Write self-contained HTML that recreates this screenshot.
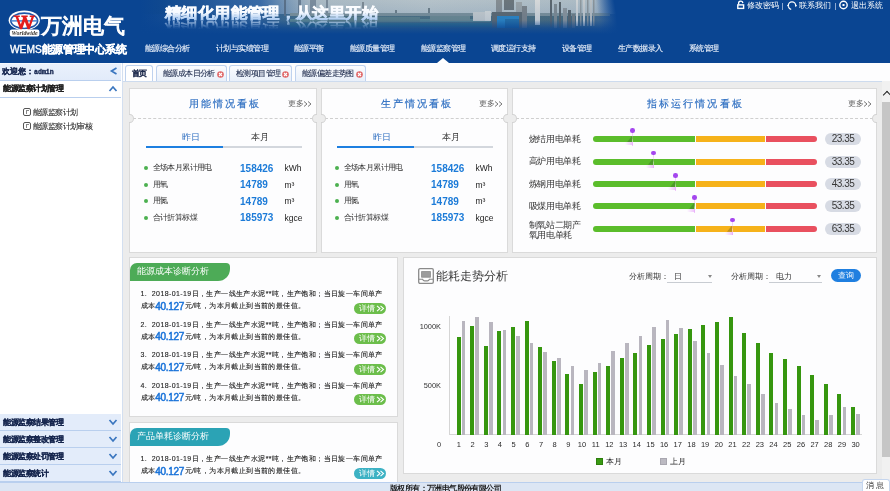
<!DOCTYPE html><html><head><meta charset="utf-8"><style>
*{margin:0;padding:0;box-sizing:border-box}
body{will-change:transform}
html,body{width:890px;height:491px;overflow:hidden;background:#ececec;font-family:"Liberation Sans",sans-serif;color:#333}
.a{position:absolute;white-space:nowrap}
#hdr{position:absolute;left:0;top:0;width:890px;height:63px;background:#0a4592;overflow:hidden}
.nav{position:absolute;top:44px;font-size:8px;letter-spacing:-0.55px;color:#e6edf8;-webkit-text-stroke:0.15px #e6edf8;line-height:10px;white-space:nowrap}
.top{position:absolute;top:1px;font-size:8px;color:#fff;line-height:10px;white-space:nowrap}
#side{position:absolute;left:0;top:63px;width:123px;height:419px;background:#fff;border-right:1px solid #d3dff0}
.srow{position:absolute;left:0;width:121px;height:17px;background:#e3ecfa;border-bottom:1px solid #b9cfee;font-size:8px;font-weight:bold;color:#1d2d55;-webkit-text-stroke:0.2px currentColor;line-height:16px;padding-left:3px;white-space:nowrap}
.chev{position:absolute;width:5px;height:5px;border-right:1.5px solid #3b79c3;border-bottom:1.5px solid #3b79c3}
#tabs{position:absolute;left:123px;top:63px;width:767px;height:18px;background:#fdfdfe}
.tab{position:absolute;top:65px;height:16px;border:1px solid #bfd2ee;border-bottom:none;border-radius:3px 3px 0 0;background:linear-gradient(#fbfcfe,#e9f0fa);font-size:8px;letter-spacing:-0.6px;color:#1d2a4c;-webkit-text-stroke:0.1px #1d2a4c;line-height:15px;white-space:nowrap}
.x{position:absolute;top:5px;width:6px;height:6px;border-radius:50%;background:#e25b5b}
.x:before,.x:after{content:"";position:absolute;left:1px;top:2.5px;width:4px;height:1px;background:#fff;transform:rotate(45deg)}
.x:after{transform:rotate(-45deg)}
.card{position:absolute;background:#fdfdfe;border:1px solid #dadada}
.ttl{position:absolute;font-size:10px;color:#2a6cc0;letter-spacing:2.2px;-webkit-text-stroke:0.15px #2a6cc0;line-height:12px;white-space:nowrap}
.more{position:absolute;font-size:7.5px;color:#666;line-height:9px;white-space:nowrap}
.dash{position:absolute;height:0;border-top:1px dashed #cfcfcf}
.notch{position:absolute;width:9px;height:9.5px;border-radius:50%;background:#ececec;border:1px solid #d3d3d3}
.stab{position:absolute;font-size:8.5px;line-height:10px;white-space:nowrap}
.li{position:absolute;font-size:8px;letter-spacing:-0.6px;color:#333;line-height:9px;white-space:nowrap}
.dot{position:absolute;width:4px;height:4px;border-radius:50%;background:#4cb050}
.num{position:absolute;font-size:11px;font-weight:bold;color:#1c7bd8;line-height:12px;white-space:nowrap;transform:scaleX(0.91);transform-origin:0 0}
.unit{position:absolute;font-size:8.5px;color:#222;line-height:9px;white-space:nowrap}
.bar{position:absolute;height:6px}
.pill{position:absolute;width:36px;height:12px;border-radius:6px;background:#d7dbe4;font-size:10px;letter-spacing:-0.5px;color:#383838;text-align:center;line-height:12.5px}
.txt{position:absolute;font-size:7px;letter-spacing:0.4px;color:#1e1e1e;-webkit-text-stroke:0.12px #1e1e1e;line-height:12px;white-space:nowrap}
.txt b{line-height:0;vertical-align:-1.5px;font-weight:normal;font-size:10px;letter-spacing:-0.3px;color:#1a73d9;-webkit-text-stroke:0.5px #1a73d9;margin-right:0.5px}
.det{position:absolute;width:32.5px;height:11px;border-radius:6px;background:#6cbe4b;color:#fff;font-size:8px;line-height:11px;padding-left:5.5px;white-space:nowrap}
.gb{position:absolute;background:#36960f}
.yb{position:absolute;background:#b9b6bf}
.xl{position:absolute;font-size:7.5px;color:#2a2a2a;line-height:8px;width:20px;text-align:center}
</style></head><body>
<div id="hdr">
<svg class="a" style="left:140px;top:0" width="480" height="40" viewBox="0 0 480 40">
<defs>
<linearGradient id="sky" x1="0" x2="480" y1="0" y2="0" gradientUnits="userSpaceOnUse">
<stop offset="0" stop-color="#0a4592"/>
<stop offset="0.05" stop-color="#10498f"/>
<stop offset="0.25" stop-color="#3a6ba6"/>
<stop offset="0.31" stop-color="#7f9cb8"/>
<stop offset="0.36" stop-color="#a9b9c3"/>
<stop offset="0.6" stop-color="#b5c2c9"/>
<stop offset="0.94" stop-color="#acbbc4"/>
<stop offset="1" stop-color="#5f85b3"/>
</linearGradient>
<linearGradient id="gr" x1="0" x2="480" y1="0" y2="0" gradientUnits="userSpaceOnUse">
<stop offset="0" stop-color="#0a4592"/>
<stop offset="0.25" stop-color="#2d5f98"/>
<stop offset="0.35" stop-color="#4f7484"/>
<stop offset="0.9" stop-color="#4c6c7c"/>
<stop offset="1" stop-color="#3d6aa0"/>
</linearGradient>
<linearGradient id="vf" x1="0" x2="0" y1="0" y2="40" gradientUnits="userSpaceOnUse">
<stop offset="0" stop-color="#0a4592" stop-opacity="0"/>
<stop offset="0.5" stop-color="#0a4592" stop-opacity="0.12"/>
<stop offset="0.7" stop-color="#0a4592" stop-opacity="0.75"/>
<stop offset="0.85" stop-color="#0a4592" stop-opacity="1"/>
</linearGradient>
<radialGradient id="rf" cx="200" cy="50" r="280" gradientUnits="userSpaceOnUse">
<stop offset="0.93" stop-color="#0a4592" stop-opacity="0"/>
<stop offset="0.995" stop-color="#0a4592" stop-opacity="1"/>
</radialGradient>
<linearGradient id="tg" x1="0" x2="0" y1="4" y2="20" gradientUnits="userSpaceOnUse">
<stop offset="0" stop-color="#ffffff"/>
<stop offset="0.55" stop-color="#f5f9ff"/>
<stop offset="0.7" stop-color="#d6e6fa"/>
<stop offset="1" stop-color="#a9c9f0"/>
</linearGradient>
<linearGradient id="rg" x1="0" x2="0" y1="18" y2="11.5" gradientUnits="userSpaceOnUse">
<stop offset="0" stop-color="#c5dcf8" stop-opacity="0.6"/>
<stop offset="1" stop-color="#8fb4e6" stop-opacity="0"/>
</linearGradient>
</defs>
<rect x="0" y="0" width="480" height="40" fill="url(#sky)"/>
<rect x="0" y="14" width="480" height="26" fill="url(#gr)"/>
<rect x="150" y="19" width="200" height="3" fill="#5f8790"/>
<rect x="150" y="23" width="210" height="4" fill="#3d7486"/>
<rect x="144" y="0" width="2" height="16" fill="#5a7088"/><rect x="158" y="0" width="3" height="15" fill="#6a7f94"/><rect x="170" y="0" width="6" height="14" fill="#7a8c9c"/><rect x="186" y="0" width="2" height="15" fill="#7a8a98"/><rect x="222" y="2" width="2" height="12" fill="#7d8a93"/><rect x="288" y="8" width="2" height="7" fill="#6f7f88"/><rect x="235" y="11" width="2" height="5" fill="#6f7f88"/><rect x="255" y="10" width="2" height="6" fill="#6f7f88"/><rect x="150" y="13" width="320" height="3" fill="#7d9199"/><rect x="180" y="17" width="100" height="5" fill="#5f8088"/><rect x="290" y="16" width="40" height="5" fill="#6f8a90"/><rect x="333" y="12" width="12" height="9" fill="#c6cbcc"/><rect x="345" y="11" width="6" height="10" fill="#d2d6d6"/><rect x="356" y="0" width="6" height="14" fill="#858d92"/><rect x="364" y="0" width="10" height="10" fill="#6b757b"/><rect x="376" y="2" width="6" height="14" fill="#9aa2a6"/><rect x="352" y="12" width="34" height="16" fill="#5f6a70"/><rect x="357" y="16" width="22" height="12" fill="#2d86c4"/><rect x="365" y="19" width="14" height="9" fill="#2670a8"/><rect x="382" y="6" width="5" height="22" fill="#7c8388"/><rect x="395" y="0" width="5" height="25" fill="#d5d8d9"/><rect x="410" y="0" width="2" height="27" fill="#5b666d"/><rect x="414" y="4" width="3" height="24" fill="#7f8a90"/><rect x="419" y="2" width="2" height="26" fill="#5a646a"/><rect x="423" y="8" width="4" height="20" fill="#8b949a"/><rect x="428" y="10" width="3" height="18" fill="#5b666d"/><rect x="432" y="14" width="3" height="14" fill="#747e84"/><rect x="436" y="0" width="2" height="26" fill="#cfd3d5"/><rect x="440" y="0" width="1.5" height="26" fill="#8f999e"/><rect x="443" y="0" width="2" height="26" fill="#c4c9cc"/><rect x="447" y="0" width="1.5" height="26" fill="#8a9499"/><rect x="450" y="0" width="2" height="26" fill="#b9bfc2"/><rect x="453" y="0" width="1.5" height="26" fill="#8a9499"/>
<rect x="0" y="0" width="480" height="40" fill="url(#vf)"/>
<rect x="0" y="0" width="480" height="40" fill="url(#rf)"/>
<text x="25" y="17.6" font-size="15" font-weight="bold" fill="url(#tg)" stroke="url(#tg)" stroke-width="0.6" textLength="213" lengthAdjust="spacingAndGlyphs">精细化用能管理，从这里开始</text>
<g transform="translate(0,40.6) scale(1,-1)"><text x="25" y="17.6" font-size="15" font-weight="bold" fill="url(#rg)" textLength="213" lengthAdjust="spacingAndGlyphs">精细化用能管理，从这里开始</text></g>
</svg>
<svg class="a" style="left:0;top:0" width="46" height="40" viewBox="0 0 46 40">
<ellipse cx="24.25" cy="20.3" rx="15.6" ry="9.8" fill="#fff"/>
<ellipse cx="24.25" cy="20.8" rx="13.4" ry="7.7" fill="none" stroke="#1f56a8" stroke-width="1.6"/>
<rect x="11" y="20.2" width="26.5" height="1.4" fill="#3f7fd0"/>
<path d="M12.8 15.6h7v1.4h-1.6l2.6 7.6 2.2-6.4-0.5-1.2h-1.2v-1.4h6.4v1.4h-1.4l2.8 7.6 2.4-7.6h-1.8v-1.4h5.2v1.4h-1l-4.4 12.4h-1.8l-2.9-8-2.8 8h-1.8l-4.6-12.4h-1z" fill="#e31c1c"/>
<rect x="9.8" y="29.6" width="29.6" height="7" rx="2" fill="#fff"/>
<text x="24.6" y="35.3" font-size="6" font-style="italic" font-weight="bold" text-anchor="middle" fill="#3a3530" font-family="Liberation Serif" textLength="26" lengthAdjust="spacingAndGlyphs">Worldwide</text>
</svg>
<div class="a" style="left:41px;top:13.5px;font-size:21px;font-weight:normal;-webkit-text-stroke:1px #fff;color:#fff;line-height:24px">万洲电气</div>
<div class="a" style="left:10px;top:42.5px;font-size:11px;letter-spacing:-0.4px;font-weight:bold;color:#fff;-webkit-text-stroke:0.3px #fff;line-height:12px"><span style="font-weight:normal;font-size:10.2px;letter-spacing:0;-webkit-text-stroke:0.35px #fff">WEMS</span>能源管理中心系统</div>
<div class="nav" style="left:145px">能源综合分析</div>
<div class="nav" style="left:216px">计划与实绩管理</div>
<div class="nav" style="left:294px">能源平衡</div>
<div class="nav" style="left:350px">能源质量管理</div>
<div class="nav" style="left:421px">能源监察管理</div>
<div class="nav" style="left:491px">调度运行支持</div>
<div class="nav" style="left:562px">设备管理</div>
<div class="nav" style="left:618px">生产数据录入</div>
<div class="nav" style="left:689px">系统管理</div>
<div class="a" style="left:436.5px;top:57.5px;width:0;height:0;border-left:6px solid transparent;border-right:6px solid transparent;border-bottom:5.5px solid #fff"></div>
<div class="top" style="left:747px;top:1px">修改密码</div><div class="a" style="left:782px;top:3px;width:1px;height:7px;background:#8fa9d0"></div>
<div class="top" style="left:799px;top:1px">联系我们</div><div class="a" style="left:834.5px;top:3px;width:1px;height:7px;background:#8fa9d0"></div>
<div class="top" style="left:851px;top:1px">退出系统</div>
<svg class="a" style="left:736px;top:0" width="10" height="10" viewBox="0 0 10 10"><path d="M2.6 4.6V3.3A2.1 2.1 0 0 1 6.8 3.1" fill="none" stroke="#fff" stroke-width="1.3"/><rect x="1.8" y="4.9" width="5.8" height="3.5" fill="none" stroke="#fff" stroke-width="1.4"/></svg>
<svg class="a" style="left:786px;top:0" width="12" height="11" viewBox="0 0 12 11"><path d="M2.3 6.2V5.6A3.7 3.7 0 0 1 9.7 5.6V6.2" fill="none" stroke="#fff" stroke-width="1.3"/><path d="M1 5.6L2.6 4.6V7.2z M11 5.6L9.4 4.6V7.2z" fill="#fff"/><path d="M2.5 6.5Q2.8 9 5.2 9.3" fill="none" stroke="#fff" stroke-width="1.2"/></svg>
<svg class="a" style="left:838px;top:0" width="11" height="10" viewBox="0 0 11 10"><circle cx="5.5" cy="5" r="3.7" fill="none" stroke="#fff" stroke-width="1.4"/><rect x="4.5" y="4" width="2" height="2" fill="#fff"/></svg>
</div>
<div id="side"></div>
<div class="srow" style="top:63px;height:18px;border-top:1px solid #f4f8fe;background:linear-gradient(#eaf1fc,#e2ebfa);font-size:7.5px;padding-left:2px;color:#15254f;-webkit-text-stroke:0.2px #15254f">欢迎您：<span style="font-family:'Liberation Mono',monospace;font-size:6.6px;font-weight:bold;-webkit-text-stroke:0.35px #15254f">admin</span></div>
<svg class="a" style="left:109px;top:66px" width="10" height="10"><path d="M7.5 2 L2.5 5 L7.5 8" fill="none" stroke="#3a76bf" stroke-width="1.7"/></svg>
<div class="srow" style="top:81px;height:17px;background:#fff;color:#222;letter-spacing:-0.5px">能源监察计划管理</div>
<svg class="a" style="left:108px;top:84px" width="10" height="10"><path d="M1.5 7 L5 3 L8.5 7" fill="none" stroke="#3a76bf" stroke-width="1.7"/></svg>
<div class="a" style="left:23px;top:108px;width:8px;height:8px;border:1.2px solid #555;border-radius:2px"></div>
<div class="a" style="left:25.5px;top:110px;width:3px;height:4px;border-left:1px solid #888;border-top:1px solid #888"></div>
<div class="li" style="left:33px;top:107.5px;color:#2a2a2a;-webkit-text-stroke:0.1px #2a2a2a">能源监察计划</div>
<div class="a" style="left:23px;top:122px;width:8px;height:8px;border:1.2px solid #555;border-radius:2px"></div>
<div class="a" style="left:25.5px;top:124px;width:3px;height:4px;border-left:1px solid #888;border-top:1px solid #888"></div>
<div class="li" style="left:33px;top:121.5px;color:#2a2a2a;-webkit-text-stroke:0.1px #2a2a2a">能源监察计划审核</div>
<div class="srow" style="top:414px;height:17px;letter-spacing:-0.5px;line-height:18px;color:#16264e">能源监察结果管理</div>
<svg class="a" style="left:108px;top:417px" width="10" height="10"><path d="M1.5 3 L5 7 L8.5 3" fill="none" stroke="#3a76bf" stroke-width="1.7"/></svg>
<div class="srow" style="top:431px;height:17px;letter-spacing:-0.5px;line-height:18px;color:#16264e">能源监察整改管理</div>
<svg class="a" style="left:108px;top:434px" width="10" height="10"><path d="M1.5 3 L5 7 L8.5 3" fill="none" stroke="#3a76bf" stroke-width="1.7"/></svg>
<div class="srow" style="top:448px;height:17px;letter-spacing:-0.5px;line-height:18px;color:#16264e">能源监察处罚管理</div>
<svg class="a" style="left:108px;top:451px" width="10" height="10"><path d="M1.5 3 L5 7 L8.5 3" fill="none" stroke="#3a76bf" stroke-width="1.7"/></svg>
<div class="srow" style="top:465px;height:17px;letter-spacing:-0.5px;line-height:18px;color:#16264e">能源监察统计</div>
<svg class="a" style="left:108px;top:468px" width="10" height="10"><path d="M1.5 3 L5 7 L8.5 3" fill="none" stroke="#3a76bf" stroke-width="1.7"/></svg>
<div id="tabs"></div>
<div class="a" style="left:123px;top:81px;width:767px;height:1px;background:#cddbee"></div>
<div class="tab" style="left:125px;width:28px;background:#fff;font-weight:bold;padding-left:5.5px">首页</div>
<div class="tab" style="left:156px;width:71px;padding-left:6px">能源成本日分析<svg style="position:absolute;left:59.5px;top:4.5px" width="7" height="7" viewBox="0 0 7 7"><circle cx="3.5" cy="3.5" r="3.3" fill="#e06666"/><path d="M2 2L5 5M5 2L2 5" stroke="#fff" stroke-width="1.1"/></svg></div>
<div class="tab" style="left:229px;width:63px;padding-left:6px">检测项目管理<svg style="position:absolute;left:51.5px;top:4.5px" width="7" height="7" viewBox="0 0 7 7"><circle cx="3.5" cy="3.5" r="3.3" fill="#e06666"/><path d="M2 2L5 5M5 2L2 5" stroke="#fff" stroke-width="1.1"/></svg></div>
<div class="tab" style="left:295px;width:71px;padding-left:6px">能源偏差走势图<svg style="position:absolute;left:59.5px;top:4.5px" width="7" height="7" viewBox="0 0 7 7"><circle cx="3.5" cy="3.5" r="3.3" fill="#e06666"/><path d="M2 2L5 5M5 2L2 5" stroke="#fff" stroke-width="1.1"/></svg></div>
<div class="card" style="left:129px;top:88px;width:188px;height:165px"></div>
<div class="ttl" style="left:188.5px;top:97.5px">用能情况看板</div>
<div class="more" style="left:288px;top:99px">更多</div><svg class="a" style="left:303px;top:100px" width="10" height="8"><path d="M1 1.5L4 4L1 6.5M5 1.5L8 4L5 6.5" fill="none" stroke="#777" stroke-width="1"/></svg>
<div class="dash" style="left:133px;top:118px;width:180px"></div>
<div class="stab" style="left:182px;top:132px;color:#2e6ec0">昨日</div>
<div class="stab" style="left:251px;top:132px;color:#333">本月</div>
<div class="a" style="left:146px;top:146px;width:77px;height:2px;background:#1d7fe0"></div>
<div class="a" style="left:223px;top:146px;width:79px;height:2px;background:#d3d7dd"></div>
<div class="dot" style="left:144px;top:166.0px"></div>
<div class="li" style="left:152.5px;top:163.0px">全场本月累计用电</div>
<div class="num" style="left:239.5px;top:161.5px">158426</div>
<div class="unit" style="left:284.5px;top:164.0px">kWh</div>
<div class="dot" style="left:144px;top:182.5px"></div>
<div class="li" style="left:152.5px;top:179.5px">用氧</div>
<div class="num" style="left:239.5px;top:178.0px">14789</div>
<div class="unit" style="left:284.5px;top:180.5px">m³</div>
<div class="dot" style="left:144px;top:199.0px"></div>
<div class="li" style="left:152.5px;top:196.0px">用氮</div>
<div class="num" style="left:239.5px;top:194.5px">14789</div>
<div class="unit" style="left:284.5px;top:197.0px">m³</div>
<div class="dot" style="left:144px;top:215.5px"></div>
<div class="li" style="left:152.5px;top:212.5px">合计折算标煤</div>
<div class="num" style="left:239.5px;top:211.0px">185973</div>
<div class="unit" style="left:284.5px;top:213.5px">kgce</div>
<div class="card" style="left:321px;top:88px;width:187px;height:165px"></div>
<div class="ttl" style="left:380.5px;top:97.5px">生产情况看板</div>
<div class="more" style="left:479px;top:99px">更多</div><svg class="a" style="left:494px;top:100px" width="10" height="8"><path d="M1 1.5L4 4L1 6.5M5 1.5L8 4L5 6.5" fill="none" stroke="#777" stroke-width="1"/></svg>
<div class="dash" style="left:325px;top:118px;width:179px"></div>
<div class="stab" style="left:373px;top:132px;color:#2e6ec0">昨日</div>
<div class="stab" style="left:442px;top:132px;color:#333">本月</div>
<div class="a" style="left:337px;top:146px;width:77px;height:2px;background:#1d7fe0"></div>
<div class="a" style="left:414px;top:146px;width:79px;height:2px;background:#d3d7dd"></div>
<div class="dot" style="left:335px;top:166.0px"></div>
<div class="li" style="left:343.5px;top:163.0px">全场本月累计用电</div>
<div class="num" style="left:430.5px;top:161.5px">158426</div>
<div class="unit" style="left:475.5px;top:164.0px">kWh</div>
<div class="dot" style="left:335px;top:182.5px"></div>
<div class="li" style="left:343.5px;top:179.5px">用氧</div>
<div class="num" style="left:430.5px;top:178.0px">14789</div>
<div class="unit" style="left:475.5px;top:180.5px">m³</div>
<div class="dot" style="left:335px;top:199.0px"></div>
<div class="li" style="left:343.5px;top:196.0px">用氮</div>
<div class="num" style="left:430.5px;top:194.5px">14789</div>
<div class="unit" style="left:475.5px;top:197.0px">m³</div>
<div class="dot" style="left:335px;top:215.5px"></div>
<div class="li" style="left:343.5px;top:212.5px">合计折算标煤</div>
<div class="num" style="left:430.5px;top:211.0px">185973</div>
<div class="unit" style="left:475.5px;top:213.5px">kgce</div>
<div class="card" style="left:512px;top:88px;width:365px;height:165px"></div>
<div class="ttl" style="left:646.5px;top:97.5px">指标运行情况看板</div>
<div class="more" style="left:848px;top:99px">更多</div><svg class="a" style="left:863px;top:100px" width="10" height="8"><path d="M1 1.5L4 4L1 6.5M5 1.5L8 4L5 6.5" fill="none" stroke="#777" stroke-width="1"/></svg>
<div class="dash" style="left:516px;top:118px;width:357px"></div>
<div class="a" style="left:129.0px;top:113px;width:6.5px;height:11px;overflow:hidden"><div class="notch" style="left:-4.0px;top:0.6px"></div></div>
<div class="a" style="left:310.5px;top:113px;width:6.5px;height:11px;overflow:hidden"><div class="notch" style="left:1.5px;top:0.6px"></div></div>
<div class="a" style="left:321.0px;top:113px;width:6.5px;height:11px;overflow:hidden"><div class="notch" style="left:-4.0px;top:0.6px"></div></div>
<div class="a" style="left:501.5px;top:113px;width:6.5px;height:11px;overflow:hidden"><div class="notch" style="left:1.5px;top:0.6px"></div></div>
<div class="a" style="left:512.0px;top:113px;width:6.5px;height:11px;overflow:hidden"><div class="notch" style="left:-4.0px;top:0.6px"></div></div>
<div class="a" style="left:870.5px;top:113px;width:6.5px;height:11px;overflow:hidden"><div class="notch" style="left:1.5px;top:0.6px"></div></div>
<div class="li" style="left:528.5px;top:134.5px;font-size:9px;letter-spacing:-0.3px">烧结用电单耗</div>
<div class="bar" style="left:593px;top:136px;width:102px;background:#5bbd2b;border-radius:3px 0 0 3px"></div>
<div class="bar" style="left:696px;top:136px;width:69px;background:#f6b21a"></div>
<div class="bar" style="left:766px;top:136px;width:51px;background:#e9505f;border-radius:0 3px 3px 0"></div>
<div class="pill" style="left:825px;top:133px">23.35</div>
<div class="a" style="left:632px;top:132.5px;width:1px;height:13px;background:linear-gradient(rgba(225,150,245,.5),rgba(225,150,245,.2) 40%,rgba(255,255,255,.5) 60%,rgba(225,150,245,.6))"></div>
<div class="a" style="left:627px;top:136px;width:5px;height:6.3px;background:rgba(40,60,40,.28);clip-path:polygon(100% 0,100% 100%,0 100%)"></div>
<div class="a" style="left:625px;top:142.3px;width:7.5px;height:3px;background:linear-gradient(90deg,rgba(230,160,250,0),rgba(230,160,250,.7))"></div>
<div class="a" style="left:630.2px;top:128.1px;width:4.6px;height:4.6px;border-radius:50%;background:#a446ee"></div>
<div class="li" style="left:528.5px;top:157.0px;font-size:9px;letter-spacing:-0.3px">高炉用电单耗</div>
<div class="bar" style="left:593px;top:158.5px;width:102px;background:#5bbd2b;border-radius:3px 0 0 3px"></div>
<div class="bar" style="left:696px;top:158.5px;width:69px;background:#f6b21a"></div>
<div class="bar" style="left:766px;top:158.5px;width:51px;background:#e9505f;border-radius:0 3px 3px 0"></div>
<div class="pill" style="left:825px;top:155.5px">33.35</div>
<div class="a" style="left:653px;top:155.0px;width:1px;height:13px;background:linear-gradient(rgba(225,150,245,.5),rgba(225,150,245,.2) 40%,rgba(255,255,255,.5) 60%,rgba(225,150,245,.6))"></div>
<div class="a" style="left:648px;top:158.5px;width:5px;height:6.3px;background:rgba(40,60,40,.28);clip-path:polygon(100% 0,100% 100%,0 100%)"></div>
<div class="a" style="left:646px;top:164.8px;width:7.5px;height:3px;background:linear-gradient(90deg,rgba(230,160,250,0),rgba(230,160,250,.7))"></div>
<div class="a" style="left:651.2px;top:150.6px;width:4.6px;height:4.6px;border-radius:50%;background:#a446ee"></div>
<div class="li" style="left:528.5px;top:179.5px;font-size:9px;letter-spacing:-0.3px">炼钢用电单耗</div>
<div class="bar" style="left:593px;top:181px;width:102px;background:#5bbd2b;border-radius:3px 0 0 3px"></div>
<div class="bar" style="left:696px;top:181px;width:69px;background:#f6b21a"></div>
<div class="bar" style="left:766px;top:181px;width:51px;background:#e9505f;border-radius:0 3px 3px 0"></div>
<div class="pill" style="left:825px;top:178px">43.35</div>
<div class="a" style="left:675px;top:177.5px;width:1px;height:13px;background:linear-gradient(rgba(225,150,245,.5),rgba(225,150,245,.2) 40%,rgba(255,255,255,.5) 60%,rgba(225,150,245,.6))"></div>
<div class="a" style="left:670px;top:181px;width:5px;height:6.3px;background:rgba(40,60,40,.28);clip-path:polygon(100% 0,100% 100%,0 100%)"></div>
<div class="a" style="left:668px;top:187.3px;width:7.5px;height:3px;background:linear-gradient(90deg,rgba(230,160,250,0),rgba(230,160,250,.7))"></div>
<div class="a" style="left:673.2px;top:173.1px;width:4.6px;height:4.6px;border-radius:50%;background:#a446ee"></div>
<div class="li" style="left:528.5px;top:201.5px;font-size:9px;letter-spacing:-0.3px">吸煤用电单耗</div>
<div class="bar" style="left:593px;top:203px;width:102px;background:#5bbd2b;border-radius:3px 0 0 3px"></div>
<div class="bar" style="left:696px;top:203px;width:69px;background:#f6b21a"></div>
<div class="bar" style="left:766px;top:203px;width:51px;background:#e9505f;border-radius:0 3px 3px 0"></div>
<div class="pill" style="left:825px;top:200px">53.35</div>
<div class="a" style="left:694px;top:199.5px;width:1px;height:13px;background:linear-gradient(rgba(225,150,245,.5),rgba(225,150,245,.2) 40%,rgba(255,255,255,.5) 60%,rgba(225,150,245,.6))"></div>
<div class="a" style="left:689px;top:203px;width:5px;height:6.3px;background:rgba(40,60,40,.28);clip-path:polygon(100% 0,100% 100%,0 100%)"></div>
<div class="a" style="left:687px;top:209.3px;width:7.5px;height:3px;background:linear-gradient(90deg,rgba(230,160,250,0),rgba(230,160,250,.7))"></div>
<div class="a" style="left:692.2px;top:195.1px;width:4.6px;height:4.6px;border-radius:50%;background:#a446ee"></div>
<div class="li" style="left:528.5px;top:219.5px;line-height:10.5px;font-size:9px;letter-spacing:-0.3px">制氧站二期产<br>氧用电单耗</div>
<div class="bar" style="left:593px;top:225.5px;width:102px;background:#5bbd2b;border-radius:3px 0 0 3px"></div>
<div class="bar" style="left:696px;top:225.5px;width:69px;background:#f6b21a"></div>
<div class="bar" style="left:766px;top:225.5px;width:51px;background:#e9505f;border-radius:0 3px 3px 0"></div>
<div class="pill" style="left:825px;top:222.5px">63.35</div>
<div class="a" style="left:732px;top:222.0px;width:1px;height:13px;background:linear-gradient(rgba(225,150,245,.5),rgba(225,150,245,.2) 40%,rgba(255,255,255,.5) 60%,rgba(225,150,245,.6))"></div>
<div class="a" style="left:727px;top:225.5px;width:5px;height:6.3px;background:rgba(40,60,40,.28);clip-path:polygon(100% 0,100% 100%,0 100%)"></div>
<div class="a" style="left:725px;top:231.8px;width:7.5px;height:3px;background:linear-gradient(90deg,rgba(230,160,250,0),rgba(230,160,250,.7))"></div>
<div class="a" style="left:730.2px;top:217.6px;width:4.6px;height:4.6px;border-radius:50%;background:#a446ee"></div>
<div class="card" style="left:129px;top:257px;width:269px;height:160px"></div>
<div class="a" style="left:129.5px;top:263.3px;width:100.5px;height:17.7px;background:#4dab57;border-radius:7px 4px 12px 0"></div>
<div class="a" style="left:137px;top:266px;font-size:9px;color:#fff;line-height:11px">能源成本诊断分析</div>
<div class="txt" style="left:140.5px;top:288.0px">1.&nbsp;&nbsp;2018-01-19日，生产一线生产水泥**吨，生产饱和；当日旋一车间单产</div>
<div class="txt" style="left:140.5px;top:300.0px">成本<b>40.127</b>元/吨，为本月截止到当前的最佳值。</div>
<div class="det" style="left:353.5px;top:302.5px;background:#6cbe4b">详情<svg style="position:absolute;left:22px;top:2px" width="9" height="7"><path d="M1 0.8L4 3.5L1 6.2M4.5 0.8L7.5 3.5L4.5 6.2" fill="none" stroke="#fff" stroke-width="1.1"/></svg></div>
<div class="txt" style="left:140.5px;top:318.5px">2.&nbsp;&nbsp;2018-01-19日，生产一线生产水泥**吨，生产饱和；当日旋一车间单产</div>
<div class="txt" style="left:140.5px;top:330.5px">成本<b>40.127</b>元/吨，为本月截止到当前的最佳值。</div>
<div class="det" style="left:353.5px;top:333.0px;background:#6cbe4b">详情<svg style="position:absolute;left:22px;top:2px" width="9" height="7"><path d="M1 0.8L4 3.5L1 6.2M4.5 0.8L7.5 3.5L4.5 6.2" fill="none" stroke="#fff" stroke-width="1.1"/></svg></div>
<div class="txt" style="left:140.5px;top:349.0px">3.&nbsp;&nbsp;2018-01-19日，生产一线生产水泥**吨，生产饱和；当日旋一车间单产</div>
<div class="txt" style="left:140.5px;top:361.0px">成本<b>40.127</b>元/吨，为本月截止到当前的最佳值。</div>
<div class="det" style="left:353.5px;top:363.5px;background:#6cbe4b">详情<svg style="position:absolute;left:22px;top:2px" width="9" height="7"><path d="M1 0.8L4 3.5L1 6.2M4.5 0.8L7.5 3.5L4.5 6.2" fill="none" stroke="#fff" stroke-width="1.1"/></svg></div>
<div class="txt" style="left:140.5px;top:379.5px">4.&nbsp;&nbsp;2018-01-19日，生产一线生产水泥**吨，生产饱和；当日旋一车间单产</div>
<div class="txt" style="left:140.5px;top:391.5px">成本<b>40.127</b>元/吨，为本月截止到当前的最佳值。</div>
<div class="det" style="left:353.5px;top:394.0px;background:#6cbe4b">详情<svg style="position:absolute;left:22px;top:2px" width="9" height="7"><path d="M1 0.8L4 3.5L1 6.2M4.5 0.8L7.5 3.5L4.5 6.2" fill="none" stroke="#fff" stroke-width="1.1"/></svg></div>
<div class="card" style="left:129px;top:422px;width:269px;height:80px"></div>
<div class="a" style="left:129.5px;top:428.3px;width:100.5px;height:17.7px;background:#2ba3b5;border-radius:7px 4px 12px 0"></div>
<div class="a" style="left:137px;top:431px;font-size:9px;color:#fff;line-height:11px">产品单耗诊断分析</div>
<div class="txt" style="left:140.5px;top:453.0px">1.&nbsp;&nbsp;2018-01-19日，生产一线生产水泥**吨，生产饱和；当日旋一车间单产</div>
<div class="txt" style="left:140.5px;top:465.0px">成本<b>40.127</b>元/吨，为本月截止到当前的最佳值。</div>
<div class="det" style="left:353.5px;top:467.5px;background:#3db2c4">详情<svg style="position:absolute;left:22px;top:2px" width="9" height="7"><path d="M1 0.8L4 3.5L1 6.2M4.5 0.8L7.5 3.5L4.5 6.2" fill="none" stroke="#fff" stroke-width="1.1"/></svg></div>
<div class="card" style="left:403px;top:257px;width:474px;height:217px"></div>
<svg class="a" style="left:418px;top:268px" width="16" height="16" viewBox="0 0 16 16"><rect x="0.7" y="0.7" width="14.6" height="14.6" rx="1.3" fill="#fff" stroke="#8a8a8a" stroke-width="1.3"/><rect x="3.6" y="3.6" width="8.8" height="5.6" fill="#9c9c9c" stroke="#8a8a8a" stroke-width="0.8"/><path d="M0.7 11.3H4.6Q5.2 12.9 6.6 12.9H9.4Q10.8 12.9 11.4 11.3H15.3" fill="none" stroke="#8a8a8a" stroke-width="1.1"/></svg>
<div class="a" style="left:436px;top:269px;font-size:12px;color:#3a3a3a;line-height:14px">能耗走势分析</div>
<div class="a" style="left:629px;top:272px;font-size:7.5px;color:#333;line-height:9px">分析周期：</div>
<div class="a" style="left:673.5px;top:272px;font-size:7.5px;color:#333;line-height:9px">日</div>
<div class="a" style="left:667px;top:282px;width:45px;height:1px;background:#c8ccd2"></div>
<div class="a" style="left:708px;top:275px;width:0;height:0;border-left:2.5px solid transparent;border-right:2.5px solid transparent;border-top:3px solid #888"></div>
<div class="a" style="left:731px;top:272px;font-size:7.5px;color:#333;line-height:9px">分析周期：</div>
<div class="a" style="left:775.5px;top:272px;font-size:7.5px;color:#333;line-height:9px">电力</div>
<div class="a" style="left:769px;top:282px;width:53px;height:1px;background:#c8ccd2"></div>
<div class="a" style="left:817px;top:275px;width:0;height:0;border-left:2.5px solid transparent;border-right:2.5px solid transparent;border-top:3px solid #888"></div>
<div class="a" style="left:831px;top:269px;width:30px;height:13px;border-radius:7px;background:#1f7fe0;color:#fff;font-size:8px;line-height:13px;text-align:center">查询</div>
<div class="a" style="left:449px;top:316px;width:1px;height:119px;background:#d5d5d5"></div>
<div class="a" style="left:449px;top:434px;width:413px;height:1px;background:#d5d5d5"></div>
<div class="a" style="left:400px;width:41px;text-align:right;top:323px;font-size:7.4px;color:#333;line-height:8px">1000K</div>
<div class="a" style="left:400px;width:41px;text-align:right;top:382px;font-size:7.4px;color:#333;line-height:8px">500K</div>
<div class="a" style="left:400px;width:41px;text-align:right;top:441px;font-size:7.4px;color:#333;line-height:8px">0</div>
<div class="gb" style="left:456.60px;top:336.9px;width:4px;height:97.7px"></div>
<div class="yb" style="left:461.80px;top:320.8px;width:3.5px;height:113.8px"></div>
<div class="xl" style="left:448.90px;top:441px">1</div>
<div class="gb" style="left:470.20px;top:326.4px;width:4px;height:108.2px"></div>
<div class="yb" style="left:475.40px;top:316.5px;width:3.5px;height:118.1px"></div>
<div class="xl" style="left:462.58px;top:441px">2</div>
<div class="gb" style="left:483.80px;top:346.2px;width:4px;height:88.4px"></div>
<div class="yb" style="left:489.00px;top:322.0px;width:3.5px;height:112.6px"></div>
<div class="xl" style="left:476.26px;top:441px">3</div>
<div class="gb" style="left:497.40px;top:331.2px;width:4px;height:103.4px"></div>
<div class="yb" style="left:502.60px;top:330.1px;width:3.5px;height:104.5px"></div>
<div class="xl" style="left:489.94px;top:441px">4</div>
<div class="gb" style="left:511.00px;top:327.0px;width:4px;height:107.6px"></div>
<div class="yb" style="left:516.20px;top:335.7px;width:3.5px;height:98.9px"></div>
<div class="xl" style="left:503.62px;top:441px">5</div>
<div class="gb" style="left:524.60px;top:321.1px;width:4px;height:113.5px"></div>
<div class="yb" style="left:529.80px;top:343.1px;width:3.5px;height:91.5px"></div>
<div class="xl" style="left:517.30px;top:441px">6</div>
<div class="gb" style="left:538.20px;top:346.8px;width:4px;height:87.8px"></div>
<div class="yb" style="left:543.40px;top:352.3px;width:3.5px;height:82.3px"></div>
<div class="xl" style="left:530.98px;top:441px">7</div>
<div class="gb" style="left:551.80px;top:360.6px;width:4px;height:74.0px"></div>
<div class="yb" style="left:557.00px;top:357.9px;width:3.5px;height:76.7px"></div>
<div class="xl" style="left:544.66px;top:441px">8</div>
<div class="gb" style="left:565.40px;top:373.6px;width:4px;height:61.0px"></div>
<div class="yb" style="left:570.60px;top:365.6px;width:3.5px;height:69.0px"></div>
<div class="xl" style="left:558.34px;top:441px">9</div>
<div class="gb" style="left:579.00px;top:383.5px;width:4px;height:51.1px"></div>
<div class="yb" style="left:584.20px;top:369.9px;width:3.5px;height:64.7px"></div>
<div class="xl" style="left:572.02px;top:441px">10</div>
<div class="gb" style="left:592.60px;top:371.8px;width:4px;height:62.8px"></div>
<div class="yb" style="left:597.80px;top:363.1px;width:3.5px;height:71.5px"></div>
<div class="xl" style="left:585.70px;top:441px">11</div>
<div class="gb" style="left:606.20px;top:366.2px;width:4px;height:68.4px"></div>
<div class="yb" style="left:611.40px;top:351.3px;width:3.5px;height:83.3px"></div>
<div class="xl" style="left:599.38px;top:441px">12</div>
<div class="gb" style="left:619.80px;top:358.2px;width:4px;height:76.4px"></div>
<div class="yb" style="left:625.00px;top:343.0px;width:3.5px;height:91.6px"></div>
<div class="xl" style="left:613.06px;top:441px">13</div>
<div class="gb" style="left:633.40px;top:352.6px;width:4px;height:82.0px"></div>
<div class="yb" style="left:638.60px;top:336.4px;width:3.5px;height:98.2px"></div>
<div class="xl" style="left:626.74px;top:441px">14</div>
<div class="gb" style="left:647.00px;top:344.6px;width:4px;height:90.0px"></div>
<div class="yb" style="left:652.20px;top:326.6px;width:3.5px;height:108.0px"></div>
<div class="xl" style="left:640.42px;top:441px">15</div>
<div class="gb" style="left:660.60px;top:339.0px;width:4px;height:95.6px"></div>
<div class="yb" style="left:665.80px;top:319.8px;width:3.5px;height:114.8px"></div>
<div class="xl" style="left:654.10px;top:441px">16</div>
<div class="gb" style="left:674.20px;top:334.0px;width:4px;height:100.6px"></div>
<div class="yb" style="left:679.40px;top:328.2px;width:3.5px;height:106.4px"></div>
<div class="xl" style="left:667.78px;top:441px">17</div>
<div class="gb" style="left:687.80px;top:329.1px;width:4px;height:105.5px"></div>
<div class="yb" style="left:693.00px;top:340.8px;width:3.5px;height:93.8px"></div>
<div class="xl" style="left:681.46px;top:441px">18</div>
<div class="gb" style="left:701.40px;top:324.8px;width:4px;height:109.8px"></div>
<div class="yb" style="left:706.60px;top:352.6px;width:3.5px;height:82.0px"></div>
<div class="xl" style="left:695.14px;top:441px">19</div>
<div class="gb" style="left:715.00px;top:322.3px;width:4px;height:112.3px"></div>
<div class="yb" style="left:720.20px;top:365.1px;width:3.5px;height:69.5px"></div>
<div class="xl" style="left:708.82px;top:441px">20</div>
<div class="gb" style="left:728.60px;top:316.7px;width:4px;height:117.9px"></div>
<div class="yb" style="left:733.80px;top:376.2px;width:3.5px;height:58.4px"></div>
<div class="xl" style="left:722.50px;top:441px">21</div>
<div class="gb" style="left:742.20px;top:332.8px;width:4px;height:101.8px"></div>
<div class="yb" style="left:747.40px;top:384.1px;width:3.5px;height:50.5px"></div>
<div class="xl" style="left:736.18px;top:441px">22</div>
<div class="gb" style="left:755.80px;top:343.3px;width:4px;height:91.3px"></div>
<div class="yb" style="left:761.00px;top:393.5px;width:3.5px;height:41.1px"></div>
<div class="xl" style="left:749.86px;top:441px">23</div>
<div class="gb" style="left:769.40px;top:353.3px;width:4px;height:81.3px"></div>
<div class="yb" style="left:774.60px;top:402.8px;width:3.5px;height:31.8px"></div>
<div class="xl" style="left:763.54px;top:441px">24</div>
<div class="gb" style="left:783.00px;top:358.9px;width:4px;height:75.7px"></div>
<div class="yb" style="left:788.20px;top:409.3px;width:3.5px;height:25.3px"></div>
<div class="xl" style="left:777.22px;top:441px">25</div>
<div class="gb" style="left:796.60px;top:365.7px;width:4px;height:68.9px"></div>
<div class="yb" style="left:801.80px;top:414.7px;width:3.5px;height:19.9px"></div>
<div class="xl" style="left:790.90px;top:441px">26</div>
<div class="gb" style="left:810.20px;top:374.6px;width:4px;height:60.0px"></div>
<div class="yb" style="left:815.40px;top:420.4px;width:3.5px;height:14.2px"></div>
<div class="xl" style="left:804.58px;top:441px">27</div>
<div class="gb" style="left:823.80px;top:383.6px;width:4px;height:51.0px"></div>
<div class="yb" style="left:829.00px;top:414.7px;width:3.5px;height:19.9px"></div>
<div class="xl" style="left:818.26px;top:441px">28</div>
<div class="gb" style="left:837.40px;top:393.5px;width:4px;height:41.1px"></div>
<div class="yb" style="left:842.60px;top:406.7px;width:3.5px;height:27.9px"></div>
<div class="xl" style="left:831.94px;top:441px">29</div>
<div class="gb" style="left:851.00px;top:407.3px;width:4px;height:27.3px"></div>
<div class="yb" style="left:856.20px;top:413.9px;width:3.5px;height:20.7px"></div>
<div class="xl" style="left:845.62px;top:441px">30</div>
<div class="a" style="left:596px;top:457.8px;width:7px;height:7px;background:#3a9a14;border:0.5px solid #2d7f0c"></div>
<div class="a" style="left:606px;top:457px;font-size:8px;color:#2a2a2a;line-height:9px">本月</div>
<div class="a" style="left:660px;top:457.8px;width:7px;height:7px;background:#bcbac2;border:0.5px solid #a9a7b0"></div>
<div class="a" style="left:670px;top:457px;font-size:8px;color:#2a2a2a;line-height:9px">上月</div>
<div class="a" style="left:882px;top:81px;width:8px;height:401px;background:#f1f1f1"></div>
<div class="a" style="left:882px;top:101.5px;width:8px;height:355px;background:#c6c6c6"></div>
<div class="a" style="left:884px;top:92px;width:6px;height:6px;border-left:1.5px solid #222;border-top:1.5px solid #222;transform:rotate(45deg)"></div>
<div class="a" style="left:0;top:482px;width:890px;height:9px;background:#dce6f4;border-top:1px solid #b9cfee"></div>
<div class="a" style="left:390px;top:483.5px;font-size:8px;letter-spacing:-0.6px;font-weight:bold;color:#1a1a1a;line-height:9px">版权所有：万洲电气股份有限公司</div>
<div class="a" style="left:862px;top:479px;width:28px;height:12px;background:#fff;border:1px solid #c6d6ee;border-bottom:none;border-radius:3px 3px 0 0"></div>
<div class="a" style="left:866px;top:481px;font-size:8px;color:#333;letter-spacing:1.5px;line-height:9px">消息</div>
</body></html>
